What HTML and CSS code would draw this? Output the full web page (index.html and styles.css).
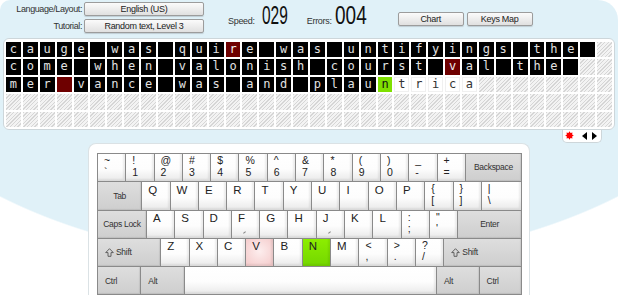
FILE: index.html
```html
<!DOCTYPE html>
<html lang="en">
<head>
  <meta charset="UTF-8" />
  <title>Typing Tutor</title>
  <link rel="stylesheet" href="styles.css">
</head>
<body>

<div class="page">
  <div class="toolbar">
    <div class="selectors">
      <div class="sel-row">
        <label>Language/Layout:</label>
        <button class="btn sel">English (US)</button>
      </div>
      <div class="sel-row">
        <label>Tutorial:</label>
        <button class="btn sel">Random text, Level 3</button>
      </div>
    </div>
    <div class="stat speed"><span class="stat-label">Speed:</span><span class="stat-value v-speed">029</span></div>
    <div class="stat errors"><span class="stat-label">Errors:</span><span class="stat-value v-errors">004</span></div>
    <button class="btn small chart">Chart</button>
    <button class="btn small">Keys Map</button>
  </div>

  <div class="text-box">
    <div class="board" id="board"></div>
  </div>
  <div class="board-tools">
    <svg class="star" width="9" height="9" viewBox="0 0 9 9"><polygon fill="#f00" points="4.5,0.2 5.57,1.91 7.5,1.5 7.09,3.43 8.8,4.5 7.09,5.57 7.5,7.5 5.57,7.09 4.5,8.8 3.43,7.09 1.5,7.5 1.91,5.57 0.2,4.5 1.91,3.43 1.5,1.5 3.43,1.91"/></svg>
    <svg class="arrow-l" width="5" height="8" viewBox="0 0 5 8"><polygon fill="#000" points="5,0 5,8 0,4"/></svg>
    <svg class="arrow-r" width="5" height="8" viewBox="0 0 5 8"><polygon fill="#000" points="0,0 0,8 5,4"/></svg>
  </div>

  <div class="keyboard">
    <div class="krow">
      <div class="key dual"><span>~</span><span>`</span></div>
      <div class="key dual"><span>!</span><span>1</span></div>
      <div class="key dual"><span>@</span><span>2</span></div>
      <div class="key dual"><span>#</span><span>3</span></div>
      <div class="key dual"><span>$</span><span>4</span></div>
      <div class="key dual"><span>%</span><span>5</span></div>
      <div class="key dual"><span>^</span><span>6</span></div>
      <div class="key dual"><span>&amp;</span><span>7</span></div>
      <div class="key dual"><span>*</span><span>8</span></div>
      <div class="key dual"><span>(</span><span>9</span></div>
      <div class="key dual"><span>)</span><span>0</span></div>
      <div class="key dual"><span>_</span><span>-</span></div>
      <div class="key dual"><span>+</span><span>=</span></div>
      <div class="key mod center bksp">Backspace</div>
    </div>
    <div class="krow">
      <div class="key mod center tab">Tab</div>
      <div class="key">Q</div>
      <div class="key">W</div>
      <div class="key">E</div>
      <div class="key">R</div>
      <div class="key">T</div>
      <div class="key">Y</div>
      <div class="key">U</div>
      <div class="key">I</div>
      <div class="key">O</div>
      <div class="key">P</div>
      <div class="key dual"><span>{</span><span>[</span></div>
      <div class="key dual"><span>}</span><span>]</span></div>
      <div class="key dual pipe"><span>|</span><span>\</span></div>
    </div>
    <div class="krow">
      <div class="key mod center caps">Caps Lock</div>
      <div class="key">A</div>
      <div class="key">S</div>
      <div class="key">D</div>
      <div class="key home">F</div>
      <div class="key">G</div>
      <div class="key">H</div>
      <div class="key home">J</div>
      <div class="key">K</div>
      <div class="key">L</div>
      <div class="key dual"><span>:</span><span>;</span></div>
      <div class="key dual"><span>"</span><span>'</span></div>
      <div class="key mod center enter">Enter</div>
    </div>
    <div class="krow">
      <div class="key mod lshift"><svg class="shift-ico" width="9" height="9" viewBox="0 0 9 9"><path d="M4.5 0.7 L8.3 4.6 H6 V8.3 H3 V4.6 H0.7 Z" fill="none" stroke="#555" stroke-width="0.9"/></svg>Shift</div>
      <div class="key">Z</div>
      <div class="key">X</div>
      <div class="key">C</div>
      <div class="key miss">V</div>
      <div class="key">B</div>
      <div class="key next">N</div>
      <div class="key">M</div>
      <div class="key dual"><span>&lt;</span><span>,</span></div>
      <div class="key dual"><span>&gt;</span><span>.</span></div>
      <div class="key dual"><span>?</span><span>/</span></div>
      <div class="key mod rshift"><svg class="shift-ico" width="9" height="9" viewBox="0 0 9 9"><path d="M4.5 0.7 L8.3 4.6 H6 V8.3 H3 V4.6 H0.7 Z" fill="none" stroke="#555" stroke-width="0.9"/></svg>Shift</div>
    </div>
    <div class="krow">
      <div class="key mod lctrl">Ctrl</div>
      <div class="key mod lalt">Alt</div>
      <div class="key space"></div>
      <div class="key mod ralt">Alt</div>
      <div class="key mod rctrl">Ctrl</div>
    </div>
  </div>
</div>

<script>
  const COLS = 36;
  const lines = [
    { text: "cauge was quire was untifyings the ", typed: 35, errors: [13] },
    { text: "come when valonish courst val the ", typed: 34, errors: [26] },
    { text: "mer vance was and plauntrica", typed: 22, errors: [3] },
    { text: "", typed: 0, errors: [] },
    { text: "", typed: 0, errors: [] }
  ];

  const board = document.getElementById("board");
  lines.forEach(line => {
    for (let i = 0; i < COLS; i++) {
      const cell = document.createElement("span");
      cell.className = "cell";
      if (i >= line.text.length) {
        cell.classList.add("empty");
      } else {
        cell.textContent = line.text[i] === " " ? "" : line.text[i];
        if (line.errors.includes(i)) cell.classList.add("err");
        else if (i < line.typed) cell.classList.add("typed");
        else if (i === line.typed) cell.classList.add("cur");
        else cell.classList.add("next");
      }
      board.appendChild(cell);
    }
  });
</script>

</body>
</html>
```

FILE: styles.css
```css
body {
  margin: 0;
  background: #fff;
  font-family: "Liberation Sans", Arial, sans-serif;
  color: #333;
}
.page {
  width: 618px;
  height: 295px;
  overflow: hidden;
  border-radius: 10px 20px 0 0;
  background: radial-gradient(ellipse 465px 264px at 309px 0, #e0f1f8 99.5%, #fff 100%);
}

/* top bar */
.toolbar {
  display: flex;
  height: 38px;
}
.selectors {
  padding-top: 2px;
}
.sel-row {
  display: flex;
  align-items: center;
  margin-bottom: 3px;
}
.sel-row label {
  width: 84px;
  padding-right: 2px;
  box-sizing: border-box;
  text-align: right;
  font-size: 9px;
  letter-spacing: -0.4px;
  color: #333;
}
.btn {
  font-family: inherit;
  font-size: 9px;
  letter-spacing: -0.3px;
  color: #222;
  height: 14px;
  padding: 0;
  background: linear-gradient(#fbfbfb, #e0e0e0);
  border: 1px solid #9c9c9c;
  border-radius: 2px;
  box-shadow: 0 1px 1px rgba(0, 0, 0, 0.15);
}
.sel {
  width: 120px;
}
.small {
  width: 66px;
  margin-top: 12px;
}
.chart {
  margin-left: 31px;
  margin-right: 3px;
}
.stat {
  display: flex;
  align-items: baseline;
  margin-top: 3px;
  height: 25px;
  line-height: 25px;
}
.speed {
  margin-left: 24px;
}
.errors {
  margin-left: 19px;
}
.stat-label {
  font-size: 9px;
  letter-spacing: -0.3px;
  color: #333;
}
.stat-value {
  display: inline-block;
  font-size: 25px;
  color: #111;
  white-space: nowrap;
  transform-origin: 0 0;
}
.v-speed {
  width: 26px;
  margin-left: 7px;
  transform: scaleX(0.62);
}
.v-errors {
  width: 32px;
  margin-left: 3px;
  transform: scaleX(0.76);
}

/* typed text board */
.text-box {
  width: 612px;
  margin-left: 3px;
  box-sizing: border-box;
  padding: 3px 2px 2px;
  background: #fff;
  border: 1px solid #cdd6da;
  border-radius: 6px;
}
.board {
  display: grid;
  grid-template-columns: repeat(36, 1fr);
  grid-auto-rows: 15.4px;
  gap: 2px;
}
.cell {
  font: 12px/15.4px "DejaVu Sans Mono", monospace;
  text-align: center;
}
.cell.typed {
  background: #000;
  color: #e2e2e2;
}
.cell.err {
  background: #6e0000;
  color: #eee;
}
.cell.cur {
  background: #7ee000;
  color: #111;
}
.cell.next {
  background: #fff;
  color: #333;
  box-shadow: inset 0 0 0 1px #f0f0f0;
}
.cell.empty {
  background: repeating-linear-gradient(135deg, #d6d6d6 0 1px, #f3f3f3 1px 2.6px);
}
.board-tools {
  width: 40px;
  height: 13px;
  margin-left: 562px;
  box-sizing: border-box;
  padding-left: 2px;
  display: flex;
  align-items: center;
  background: #fff;
  border: 1px solid #cdd6da;
  border-top: none;
  border-radius: 0 0 5px 5px;
}
.arrow-l {
  margin-left: 8px;
}
.arrow-r {
  margin-left: 5px;
}

/* keyboard */
.keyboard {
  width: 442px;
  height: 160px;
  margin-left: 88px;
  box-sizing: border-box;
  padding: 9px 7px 0 8px;
  background: #fff;
  border: 1px solid #dbe2e5;
  border-bottom: none;
  border-radius: 8px 8px 0 0;
}
.krow {
  display: flex;
  margin-top: -1px;
}
.krow:first-child {
  margin-top: 0;
}
.key {
  position: relative;
  width: 29.3px;
  height: 29.3px;
  flex: none;
  box-sizing: border-box;
  margin-left: -1px;
  padding: 2.5px 0 0 6px;
  font-size: 11.5px;
  line-height: 1;
  color: #222;
  border: 1px solid #8a8a8a;
  background: linear-gradient(#fff 0%, #fdfdfd 55%, #e9e9e9 100%);
  box-shadow: inset -2px -2px 2px rgba(0, 0, 0, 0.07);
}
.key:first-child {
  margin-left: 0;
}
.key.dual {
  display: flex;
  flex-direction: column;
  padding-top: 1px;
  font-size: 10.5px;
  line-height: 11.6px;
}
.key.mod {
  display: flex;
  align-items: center;
  padding: 0 0 0 7px;
  font-size: 8.5px;
  letter-spacing: -0.3px;
  color: #333;
  background: linear-gradient(#dedede, #cecece);
  box-shadow: inset -1px -1px 1px rgba(0, 0, 0, 0.08);
}
.key.center {
  justify-content: center;
  padding: 0;
}
.key.miss {
  background: radial-gradient(circle at 50% 45%, #fdeeee, #f4c9c9);
}
.key.next {
  background: linear-gradient(#8cee00, #74d600);
}
.key.home::after {
  content: "";
  position: absolute;
  left: 11px;
  top: 21px;
  width: 3px;
  height: 1px;
  background: #888;
  transform: rotate(-40deg);
}
.shift-ico {
  margin-right: 2px;
}
.bksp { width: 57.1px; }
.tab { width: 45.3px; }
.pipe { width: 41.1px; }
.caps { width: 50px; }
.enter { width: 64.7px; }
.lshift { width: 64.3px; }
.rshift { width: 78.7px; }
.lctrl { width: 44.3px; }
.lalt { width: 45px; }
.space { width: 252.7px; }
.ralt { width: 43.6px; }
.rctrl { width: 43.4px; }
```
